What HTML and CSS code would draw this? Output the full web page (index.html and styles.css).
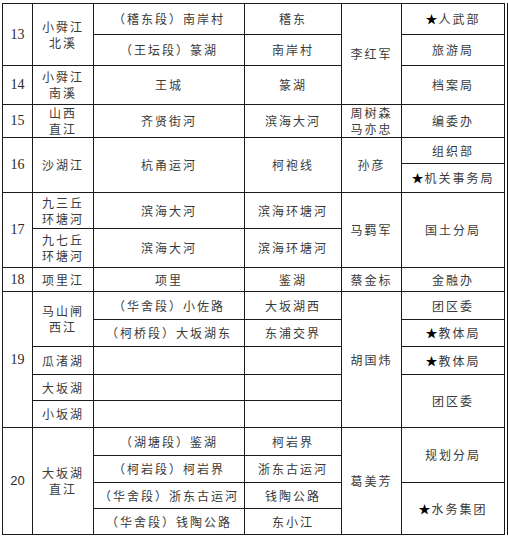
FILE: index.html
```html
<!DOCTYPE html>
<html lang="zh">
<head>
<meta charset="utf-8">
<title>河长表</title>
<link rel="stylesheet" href="styles.css">
</head>
<body>
<div class="frame">
<table class="grid">
<colgroup>
<col class="c1"><col class="c2"><col class="c3"><col class="c4"><col class="c5"><col class="c6">
</colgroup>
<tbody>
<tr>
  <td class="num" rowspan="2">13</td>
  <td rowspan="2">小舜江<br>北溪</td>
  <td>（稽东段）南岸村</td>
  <td>稽东</td>
  <td rowspan="3">李红军</td>
  <td><span class="star">★</span>人武部</td>
</tr>
<tr>
  <td>（王坛段）篆湖</td>
  <td>南岸村</td>
  <td>旅游局</td>
</tr>
<tr>
  <td class="num">14</td>
  <td>小舜江<br>南溪</td>
  <td>王城</td>
  <td>篆湖</td>
  <td>档案局</td>
</tr>
<tr>
  <td class="num">15</td>
  <td>山西<br>直江</td>
  <td>齐贤街河</td>
  <td>滨海大河</td>
  <td>周树森<br>马亦忠</td>
  <td>编委办</td>
</tr>
<tr>
  <td class="num" rowspan="2">16</td>
  <td rowspan="2">沙湖江</td>
  <td rowspan="2">杭甬运河</td>
  <td rowspan="2">柯袍线</td>
  <td rowspan="2">孙彦</td>
  <td>组织部</td>
</tr>
<tr>
  <td><span class="star">★</span>机关事务局</td>
</tr>
<tr>
  <td class="num" rowspan="2">17</td>
  <td>九三丘<br>环塘河</td>
  <td>滨海大河</td>
  <td>滨海环塘河</td>
  <td rowspan="2">马羁军</td>
  <td rowspan="2">国土分局</td>
</tr>
<tr>
  <td>九七丘<br>环塘河</td>
  <td>滨海大河</td>
  <td>滨海环塘河</td>
</tr>
<tr>
  <td class="num">18</td>
  <td>项里江</td>
  <td>项里</td>
  <td>鉴湖</td>
  <td>蔡金标</td>
  <td>金融办</td>
</tr>
<tr>
  <td class="num" rowspan="5">19</td>
  <td rowspan="2">马山闸<br>西江</td>
  <td>（华舍段）小佐路</td>
  <td>大坂湖西</td>
  <td rowspan="5">胡国炜</td>
  <td>团区委</td>
</tr>
<tr>
  <td>（柯桥段）大坂湖东</td>
  <td>东浦交界</td>
  <td><span class="star">★</span>教体局</td>
</tr>
<tr>
  <td>瓜渚湖</td>
  <td></td>
  <td></td>
  <td><span class="star">★</span>教体局</td>
</tr>
<tr>
  <td>大坂湖</td>
  <td></td>
  <td></td>
  <td rowspan="2">团区委</td>
</tr>
<tr>
  <td>小坂湖</td>
  <td></td>
  <td></td>
</tr>
<tr>
  <td class="num sans" rowspan="4">20</td>
  <td rowspan="4">大坂湖<br>直江</td>
  <td>（湖塘段）鉴湖</td>
  <td>柯岩界</td>
  <td rowspan="4">葛美芳</td>
  <td rowspan="2">规划分局</td>
</tr>
<tr>
  <td>（柯岩段）柯岩界</td>
  <td>浙东古运河</td>
</tr>
<tr>
  <td>（华舍段）浙东古运河</td>
  <td>钱陶公路</td>
  <td rowspan="2"><span class="star">★</span>水务集团</td>
</tr>
<tr>
  <td>（华舍段）钱陶公路</td>
  <td>东小江</td>
</tr>
</tbody>
</table>
</div>
</body>
</html>
```
FILE: styles.css
```css
html, body {
  margin: 0;
  padding: 0;
  background: #ffffff;
}

.frame {
  display: inline-block;
  margin: 3px 0 0 2px;
  padding-right: 2px;
  border-right: 2px solid #111;
}

.grid {
  border-collapse: collapse;
  table-layout: fixed;
  width: 502px;
  font-family: "Noto Sans CJK SC", "Noto Sans", sans-serif;
  font-size: 12px;
  line-height: 16px;
  letter-spacing: 2px;
  color: #3a3a3a;
}

.c1 { width: 30px; }
.c2 { width: 61px; }
.c3 { width: 151px; }
.c4 { width: 97px; }
.c5 { width: 60px; }
.c6 { width: 103px; }

.grid td {
  border: 1px solid #1a1a1a;
  padding: 0;
  text-align: center;
  vertical-align: middle;
  white-space: nowrap;
  overflow: hidden;
}

.grid .num {
  font-family: "Liberation Serif", serif;
  font-size: 14px;
  letter-spacing: 0;
  color: #2a2a2a;
}

.grid .num.sans {
  font-family: "Liberation Sans", sans-serif;
  font-size: 13px;
}

.star {
  color: #000;
  letter-spacing: 1px;
}

.grid tr:nth-child(1) { height: 31px; }
.grid tr:nth-child(2) { height: 31px; }
.grid tr:nth-child(3) { height: 39px; }
.grid tr:nth-child(4) { height: 33px; }
.grid tr:nth-child(5) { height: 26px; }
.grid tr:nth-child(6) { height: 29px; }
.grid tr:nth-child(7) { height: 36px; }
.grid tr:nth-child(8) { height: 39px; }
.grid tr:nth-child(9) { height: 24px; }
.grid tr:nth-child(10) { height: 28px; }
.grid tr:nth-child(11) { height: 27px; }
.grid tr:nth-child(12) { height: 28px; }
.grid tr:nth-child(13) { height: 26px; }
.grid tr:nth-child(14) { height: 27px; }
.grid tr:nth-child(15) { height: 28px; }
.grid tr:nth-child(16) { height: 27px; }
.grid tr:nth-child(17) { height: 26px; }
.grid tr:nth-child(18) { height: 26px; }
```
